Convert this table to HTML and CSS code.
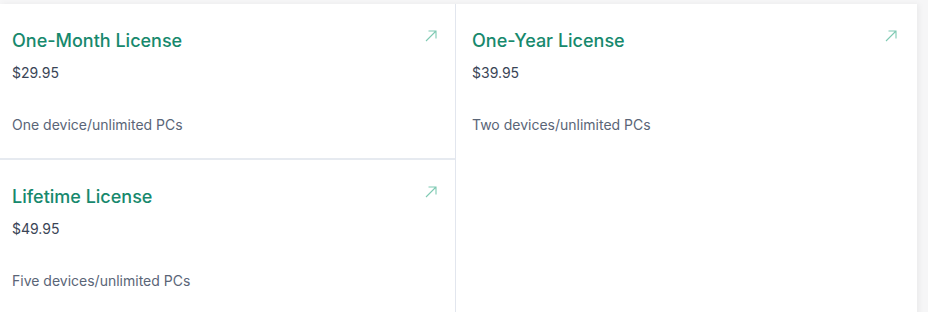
FILE: index.html
```html
<!DOCTYPE html>
<html>
<head>
<meta charset="utf-8">
<link rel="stylesheet" href="styles.css">
</head>
<body>
<div class="panel">
  <div class="col col-left">
    <a class="card">
      <div class="card-head">
        <h3 class="title">One-Month License</h3>
        <svg class="arrow" viewBox="0 0 14 14" width="14" height="14"><path d="M2 12 L12 2 M4.5 2 H12 V9.5" fill="none" stroke="currentColor" stroke-width="1.1"/></svg>
      </div>
      <div class="price">$29.95</div>
      <div class="desc">One device/unlimited PCs</div>
    </a>
    <a class="card card-bottom">
      <div class="card-head">
        <h3 class="title">Lifetime License</h3>
        <svg class="arrow" viewBox="0 0 14 14" width="14" height="14"><path d="M2 12 L12 2 M4.5 2 H12 V9.5" fill="none" stroke="currentColor" stroke-width="1.1"/></svg>
      </div>
      <div class="price">$49.95</div>
      <div class="desc">Five devices/unlimited PCs</div>
    </a>
  </div>
  <div class="col col-right">
    <a class="card card-right">
      <div class="card-head">
        <h3 class="title">One-Year License</h3>
        <svg class="arrow" viewBox="0 0 14 14" width="14" height="14"><path d="M2 12 L12 2 M4.5 2 H12 V9.5" fill="none" stroke="currentColor" stroke-width="1.1"/></svg>
      </div>
      <div class="price">$39.95</div>
      <div class="desc">Two devices/unlimited PCs</div>
    </a>
  </div>
</div>
</body>
</html>
```
FILE: styles.css
```css
html, body {
  margin: 0;
  padding: 0;
  background: #f6f6f7;
  font-family: Inter, "Noto Sans", sans-serif;
}
body {
  padding-top: 4px;
  height: 308px;
  overflow: hidden;
}
.panel {
  width: 917px;
  height: 320px;
  background: #ffffff;
  display: grid;
  grid-template-columns: 456px 1fr;
  box-shadow: 2px 0 6px rgba(0,0,0,0.05);
}
.col-left {
  border-right: 1px solid #e2e6ee;
  display: flex;
  flex-direction: column;
}
.card {
  display: block;
  height: 154px;
  box-sizing: border-box;
  padding: 24px 17px 0 12px;
  text-decoration: none;
}
.card-right {
  padding-left: 16px;
  padding-right: 19px;
}
.card-bottom {
  border-top: 2px solid #e6eaf0;
}
.card-head {
  display: flex;
  justify-content: space-between;
  align-items: flex-start;
}
.title {
  margin: 0;
  font-size: 18px;
  font-weight: 500;
  line-height: 26px;
  color: #17896d;
}
.arrow {
  color: #7fcab3;
  margin-top: 1px;
}
.price {
  margin-top: 10px;
  font-size: 14px;
  line-height: 18px;
  color: #3a4556;
}
.desc {
  margin-top: 34px;
  font-size: 14px;
  line-height: 18px;
  color: #5a6577;
}
```
